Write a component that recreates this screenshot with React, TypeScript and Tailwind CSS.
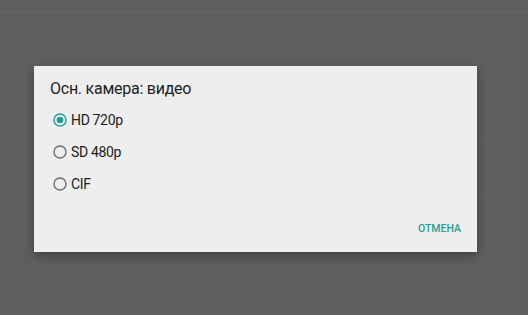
import React from "react";

const options = [
  { label: "HD 720p", checked: true },
  { label: "SD 480p", checked: false },
  { label: "CIF", checked: false },
];

function Radio({ checked }: { checked: boolean }) {
  return (
    <svg width="14" height="14" viewBox="0 0 14 14" className="shrink-0">
      <circle cx="7" cy="7" r="6" fill="none" stroke={checked ? "#1e9e8f" : "#6f6f6f"} strokeWidth="1.4" />
      {checked && <circle cx="7" cy="7" r="3.3" fill="#1e9e8f" />}
    </svg>
  );
}

export default function App() {
  return (
    <div className="relative h-[315px] w-[528px] overflow-hidden bg-[#5f5f5f]" style={{ fontFamily: "Roboto, 'Noto Sans', sans-serif" }}>
      <div className="flex flex-col">
        <div className="h-[12px] border-b border-[#666666]" />
        <div className="h-[131px] border-b border-[#646464]" />
        <div className="h-[53px] border-b border-[#646464]" />
      </div>
      <div className="absolute left-[34px] top-[66px] flex h-[186px] w-[443px] flex-col bg-[#eeeeee] shadow-[0_4px_10px_rgba(0,0,0,0.35)]">
        <div className="pl-[16px] pt-[13px] text-[16px] leading-[20px] tracking-[-0.25px] text-[#222222]">Осн. камера: видео</div>
        <div className="mt-[11px] flex flex-col gap-[12px] pl-[19px]">
          {options.map((o) => (
            <div key={o.label} className="flex h-[20px] items-center gap-[4px]">
              <Radio checked={o.checked} />
              <span className="text-[14px] leading-[20px] tracking-[-0.35px] text-[#222222]">{o.label}</span>
            </div>
          ))}
        </div>
        <div className="mt-auto flex justify-end pb-[16px] pr-[16px]">
          <span className="text-[10.5px] font-medium leading-[14px] text-[#26a093]">ОТМЕНА</span>
        </div>
      </div>
    </div>
  );
}
